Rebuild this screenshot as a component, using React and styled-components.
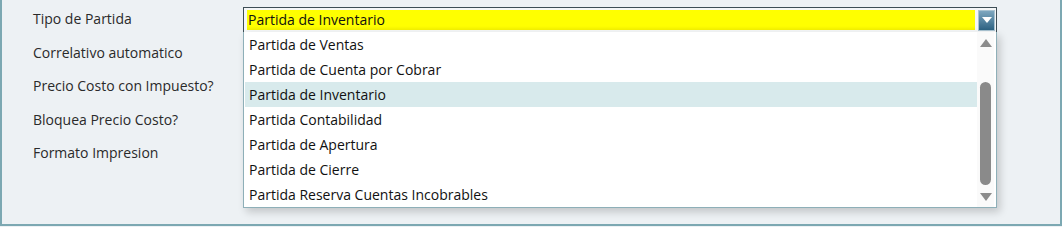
import styled, { createGlobalStyle } from "styled-components";

const Global = createGlobalStyle`
  html, body {
    margin: 0;
    padding: 0;
    background: #edf1f4;
  }
  body {
    font-family: "Open Sans", "Noto Sans", sans-serif;
  }
`;

const etiquetas = [
  "Tipo de Partida",
  "Correlativo automatico",
  "Precio Costo con Impuesto?",
  "Bloquea Precio Costo?",
  "Formato Impresion",
];

const opciones = [
  "Partida de Ventas",
  "Partida de Cuenta por Cobrar",
  "Partida de Inventario",
  "Partida Contabilidad",
  "Partida de Apertura",
  "Partida de Cierre",
  "Partida Reserva Cuentas Incobrables",
];

const App = () => {
  return (
    <>
      <Global />
      <Panel>
        <Etiquetas>
          {etiquetas.map((e) => (
            <Etiqueta key={e}>{e}</Etiqueta>
          ))}
        </Etiquetas>
        <Campo>
          <Select>
            <Valor>Partida de Inventario</Valor>
            <Boton>
              <svg width="10" height="6" viewBox="0 0 10 6">
                <path d="M0 0 L10 0 L5 6 Z" fill="#fff" />
              </svg>
            </Boton>
          </Select>
          <Lista>
            <Items>
              {opciones.map((o) => (
                <Item key={o} $activo={o === "Partida de Inventario"}>
                  {o}
                </Item>
              ))}
            </Items>
            <Scroll>
              <svg width="12" height="8" viewBox="0 0 12 8">
                <path d="M6 0 L12 8 L0 8 Z" fill="#8c8c8c" />
              </svg>
              <Pista>
                <Thumb />
              </Pista>
              <svg width="12" height="8" viewBox="0 0 12 8">
                <path d="M0 0 L12 0 L6 8 Z" fill="#8c8c8c" />
              </svg>
            </Scroll>
          </Lista>
        </Campo>
      </Panel>
    </>
  );
};

export default App;

const Panel = styled.div`
  position: relative;
  box-sizing: border-box;
  width: 1062px;
  height: 226px;
  display: flex;
  border: 2px solid #7ca8b2;
  border-top: none;
  background: #edf1f4;
`;

const Etiquetas = styled.div`
  width: 241px;
  padding-left: 31px;
  padding-top: 2px;
  box-sizing: border-box;
  display: flex;
  flex-direction: column;
`;

const Etiqueta = styled.div`
  height: 33.5px;
  line-height: 33.5px;
  font-size: 14px;
  color: #2a2a2a;
  white-space: nowrap;
`;

const Campo = styled.div`
  position: relative;
  padding-top: 7px;
  width: 754px;
`;

const Select = styled.div`
  box-sizing: border-box;
  height: 26px;
  display: flex;
  align-items: center;
  gap: 3px;
  padding: 2px 1px 2px 3px;
  border: 1px solid #3d4d55;
  background: #f4f6f7;
`;

const Valor = styled.div`
  flex: 1;
  height: 20px;
  line-height: 20px;
  background: linear-gradient(#ffff00 80%, #f2ef00);
  font-size: 14px;
  color: #111;
  padding-left: 1px;
`;

const Boton = styled.div`
  width: 17px;
  height: 21px;
  display: flex;
  align-items: center;
  justify-content: center;
  background: linear-gradient(#7ea7bf, #2d6282);
  border: 1px solid #a9c3d1;
  box-sizing: border-box;
`;

const Lista = styled.div`
  position: absolute;
  left: 0;
  top: 32px;
  width: 754px;
  height: 176px;
  box-sizing: border-box;
  display: flex;
  background: #fff;
  border: 1px solid #8eafb8;
  border-top: none;
  box-shadow: 3px 4px 8px rgba(0, 0, 0, 0.18);
`;

const Items = styled.div`
  flex: 1;
  padding: 0 0 0 1px;
`;

const Item = styled.div`
  height: 25px;
  line-height: 25px;
  padding-left: 4px;
  font-size: 14px;
  color: #111;
  background: ${(p) => (p.$activo ? "#d8eaec" : "transparent")};
`;

const Scroll = styled.div`
  width: 17px;
  margin-right: 2px;
  background: #fafafa;
  display: flex;
  flex-direction: column;
  align-items: center;
  padding: 7px 0 6px;
  box-sizing: border-box;
`;

const Pista = styled.div`
  flex: 1;
  width: 100%;
  display: flex;
  justify-content: center;
  padding: 35px 0 8px;
  box-sizing: border-box;
`;

const Thumb = styled.div`
  width: 11px;
  border-radius: 6px;
  background: #8a8a8a;
`;
